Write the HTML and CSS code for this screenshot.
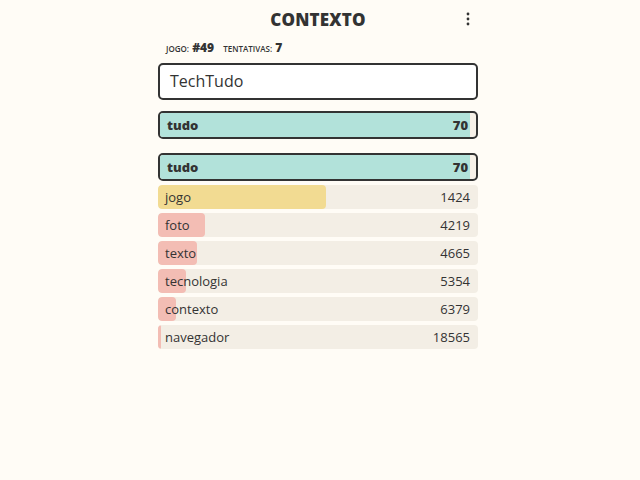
FILE: index.html
```html
<!DOCTYPE html>
<html lang="pt">
<head>
    <meta charset="UTF-8">
    <meta name="viewport" content="width=device-width, initial-scale=1.0">
    <title>Contexto</title>
    <link rel="stylesheet" href="styles.css">
</head>
<body>
    <div class="wrapper">
        <div class="top-bar">
            <h1 class="title">CONTEXTO</h1>
            <button class="menu" aria-label="menu">
                <svg width="4" height="14" viewBox="0 0 4 14">
                    <circle cx="2" cy="2" r="1.4" fill="#333"/>
                    <circle cx="2" cy="7" r="1.4" fill="#333"/>
                    <circle cx="2" cy="12" r="1.4" fill="#333"/>
                </svg>
            </button>
        </div>
        <div class="info">
            <span class="label">Jogo:</span> <span class="value">#49</span>
            <span class="label spaced">Tentativas:</span> <span class="value">7</span>
        </div>
        <div class="word-input">TechTudo</div>

        <div class="row current">
            <div class="bar teal" style="width: 98%"></div>
            <span class="word">tudo</span><span class="rank">70</span>
        </div>

        <div class="guesses">
            <div class="row current">
                <div class="bar teal" style="width: 98%"></div>
                <span class="word">tudo</span><span class="rank">70</span>
            </div>
            <div class="row">
                <div class="bar yellow" style="width: 52.5%"></div>
                <span class="word">jogo</span><span class="rank">1424</span>
            </div>
            <div class="row">
                <div class="bar red" style="width: 14.7%"></div>
                <span class="word">foto</span><span class="rank">4219</span>
            </div>
            <div class="row">
                <div class="bar red" style="width: 12.2%"></div>
                <span class="word">texto</span><span class="rank">4665</span>
            </div>
            <div class="row">
                <div class="bar red" style="width: 8.8%"></div>
                <span class="word">tecnologia</span><span class="rank">5354</span>
            </div>
            <div class="row">
                <div class="bar red" style="width: 5.6%"></div>
                <span class="word">contexto</span><span class="rank">6379</span>
            </div>
            <div class="row">
                <div class="bar red" style="width: 1%"></div>
                <span class="word">navegador</span><span class="rank">18565</span>
            </div>
        </div>
    </div>
</body>
</html>
```

FILE: styles.css
```css
body {
    margin: 0;
    padding: 0 4px 0 0;
    background: #fffcf6;
    font-family: 'Open Sans', 'Noto Sans', sans-serif;
    color: #333;
}

.wrapper {
    width: 320px;
    margin: 0 auto;
}

.top-bar {
    position: relative;
    height: 38px;
    display: flex;
    justify-content: center;
    align-items: center;
}

.title {
    margin: 0;
    font-size: 17px;
    font-weight: 800;
    letter-spacing: 0.2px;
    color: #333;
}

.menu {
    position: absolute;
    right: 8px;
    top: 12px;
    border: none;
    background: none;
    padding: 0;
    cursor: pointer;
}

.info {
    padding: 1px 0 0 8px;
    height: 18px;
    font-size: 12px;
}

.label {
    text-transform: uppercase;
    font-size: 8px;
    font-weight: 600;
}

.spaced {
    margin-left: 6px;
}

.value {
    font-weight: 800;
    font-size: 12px;
}

.word-input {
    margin-top: 6px;
    height: 33px;
    border: 2px solid #333;
    border-radius: 5px;
    background: #fff;
    padding: 0 10px;
    font-size: 16px;
    line-height: 33px;
    font-weight: 500;
    color: #333;
}

.row {
    position: relative;
    height: 24px;
    display: flex;
    justify-content: space-between;
    align-items: center;
    padding: 0 8px 0 7px;
    background: #f3eee5;
    border-radius: 4px;
    overflow: hidden;
    font-size: 13px;
    font-weight: 500;
    margin-top: 4px;
}

.row.current {
    height: 24px;
    border: 2px solid #333;
    border-radius: 5px;
    background: #f7f1e8;
    margin-top: 11px;
    font-weight: 800;
}

.guesses {
    margin-top: 14px;
}

.guesses .row.current {
    margin-top: 0;
}

.bar {
    position: absolute;
    left: 0;
    top: 0;
    bottom: 0;
    border-radius: 4px;
}

.teal {
    background: #b2e2da;
    border-radius: 0;
}

.yellow {
    background: #f2db92;
}

.red {
    background: #f3bdb4;
}

.word, .rank {
    position: relative;
}
```
